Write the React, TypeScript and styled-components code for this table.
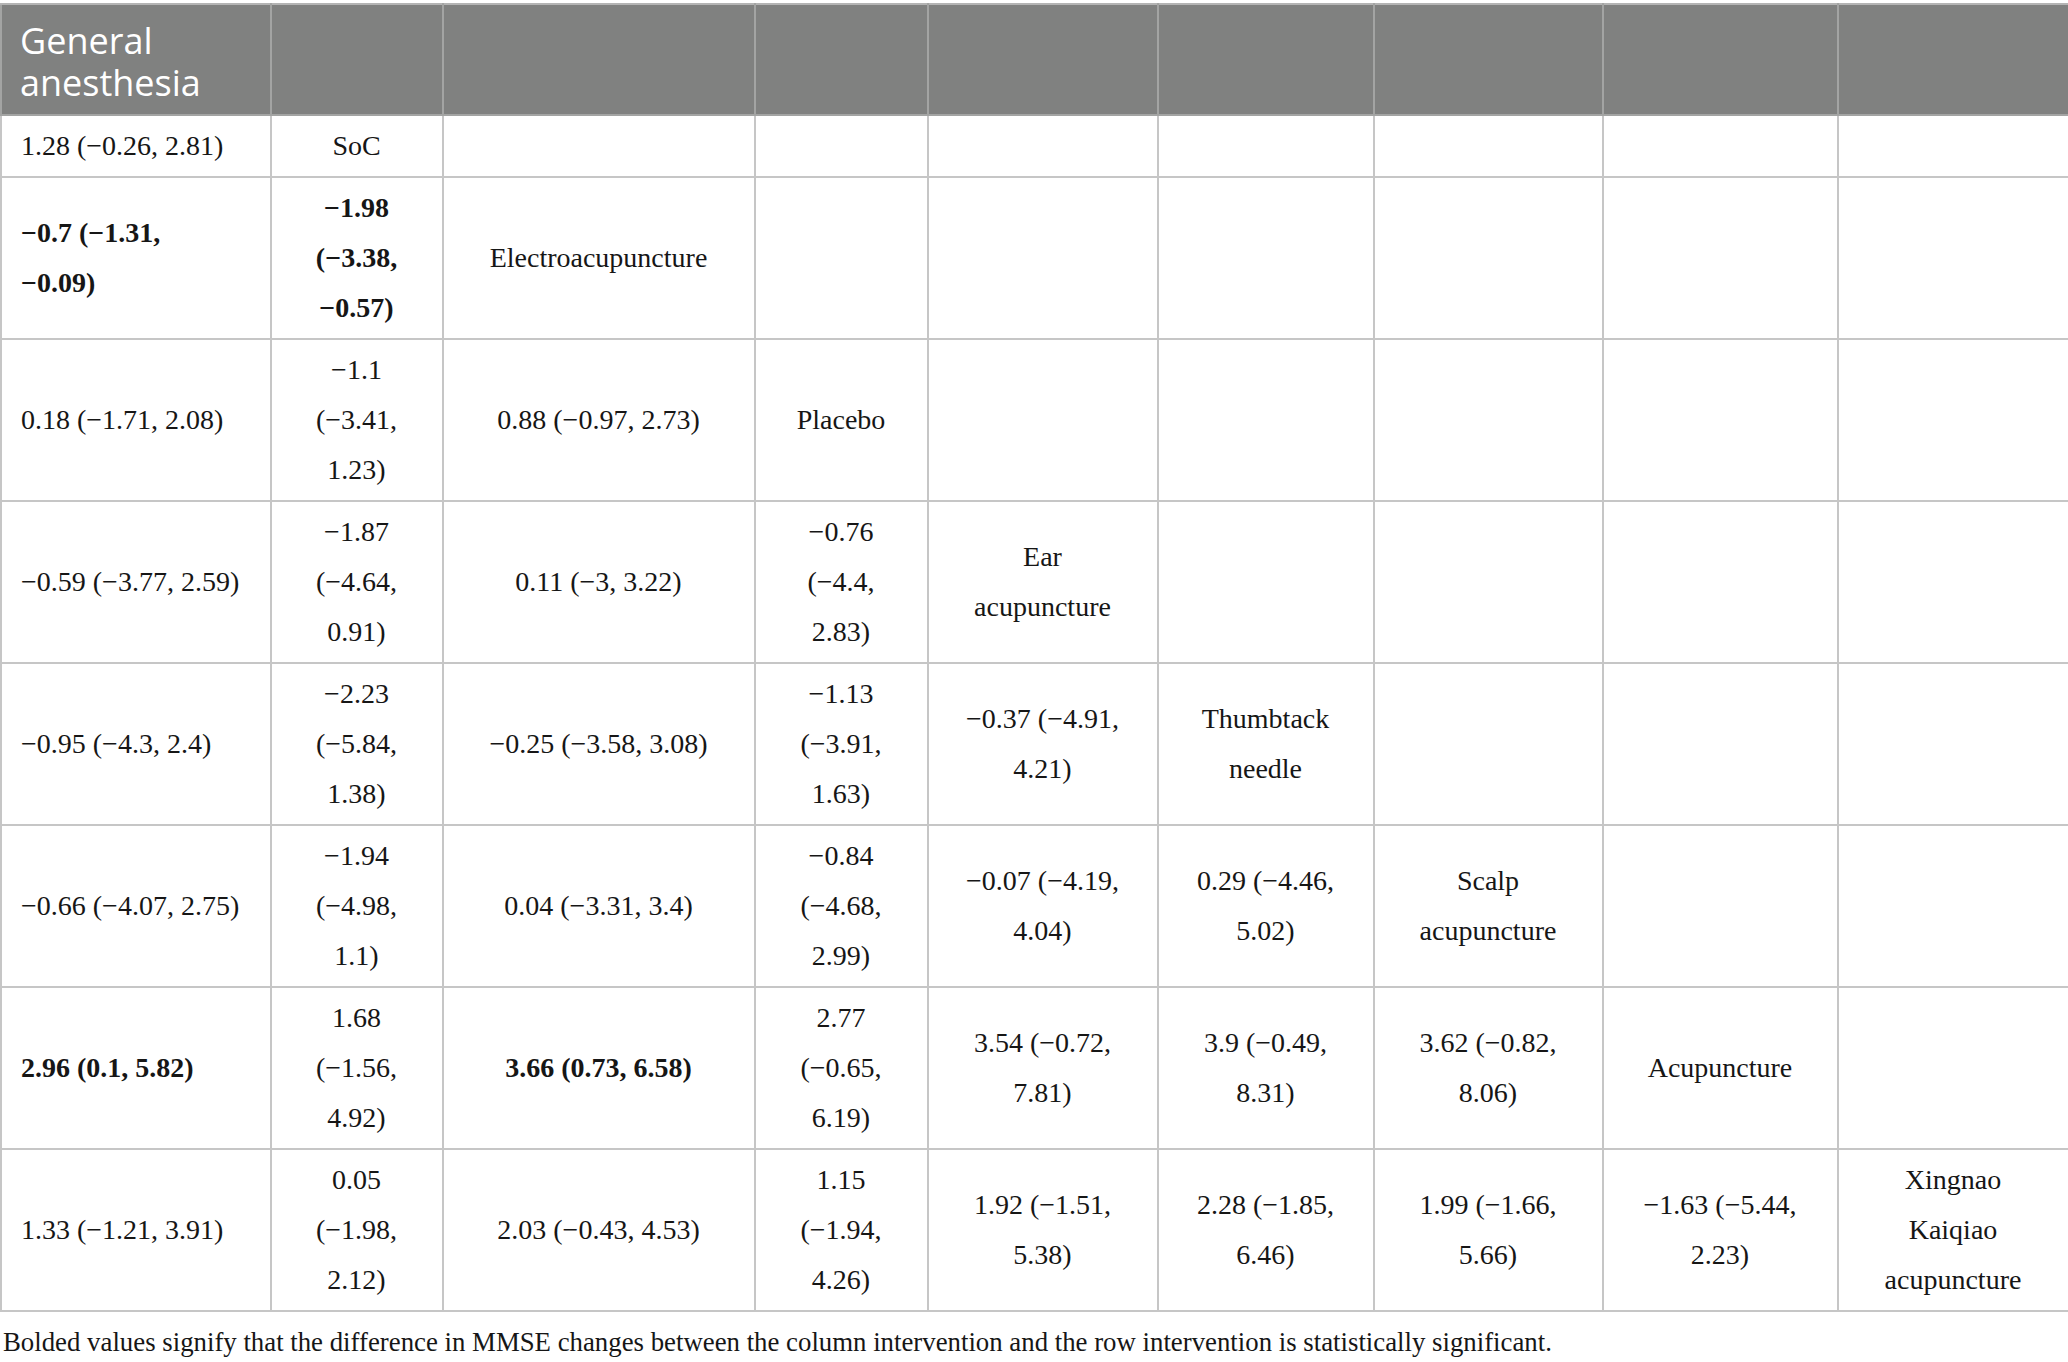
import styled, {createGlobalStyle} from 'styled-components'

const Global = createGlobalStyle`
    body {
        margin: 0;
        background: #ffffff;
    }
`

const Page = styled.div`
    width: 2068px;
    padding-top: 3px;
`

const Table = styled.table`
    width: 2068px;
    table-layout: fixed;
    border-collapse: collapse;
    font-family: 'Liberation Serif', 'Times New Roman', serif;
    font-size: 28px;
    color: #161616;
`

const HeadCell = styled.th`
    background: #808180;
    color: #ffffff;
    font-family: 'Open Sans', 'Noto Sans', sans-serif;
    font-weight: 400;
    font-size: 36px;
    line-height: 42px;
    text-align: left;
    vertical-align: top;
    padding: 15px 18px 10px;
    height: 84px;
    border: 2px solid #a3a4a3;
    border-top-color: #b4b4b4;
`

const Cell = styled.td<{$left?: boolean; $bold?: boolean}>`
    border: 2px solid #c6c6c6;
    padding: 5px 20px 5px 19px;
    line-height: 50px;
    text-align: ${(p) => (p.$left ? 'left' : 'center')};
    vertical-align: middle;
    font-weight: ${(p) => (p.$bold ? 700 : 400)};
`

const Line = styled.div`
    white-space: nowrap;
`

const Caption = styled.p`
    margin: 12px 0 0 3px;
    font-family: 'Liberation Serif', 'Times New Roman', serif;
    font-size: 26.8px;
    line-height: 36px;
    color: #161616;
`

const widths = [270, 172, 312, 173, 230, 216, 229, 235, 231]

type Entry = {lines: string[]; bold?: boolean}

const t = (...lines: string[]): Entry => ({lines})
const b = (...lines: string[]): Entry => ({lines, bold: true})

const rows: Entry[][] = [
    [t('1.28 (−0.26, 2.81)'), t('SoC')],
    [b('−0.7 (−1.31,', '−0.09)'), b('−1.98', '(−3.38,', '−0.57)'), t('Electroacupuncture')],
    [t('0.18 (−1.71, 2.08)'), t('−1.1', '(−3.41,', '1.23)'), t('0.88 (−0.97, 2.73)'), t('Placebo')],
    [
        t('−0.59 (−3.77, 2.59)'),
        t('−1.87', '(−4.64,', '0.91)'),
        t('0.11 (−3, 3.22)'),
        t('−0.76', '(−4.4,', '2.83)'),
        t('Ear', 'acupuncture'),
    ],
    [
        t('−0.95 (−4.3, 2.4)'),
        t('−2.23', '(−5.84,', '1.38)'),
        t('−0.25 (−3.58, 3.08)'),
        t('−1.13', '(−3.91,', '1.63)'),
        t('−0.37 (−4.91,', '4.21)'),
        t('Thumbtack', 'needle'),
    ],
    [
        t('−0.66 (−4.07, 2.75)'),
        t('−1.94', '(−4.98,', '1.1)'),
        t('0.04 (−3.31, 3.4)'),
        t('−0.84', '(−4.68,', '2.99)'),
        t('−0.07 (−4.19,', '4.04)'),
        t('0.29 (−4.46,', '5.02)'),
        t('Scalp', 'acupuncture'),
    ],
    [
        b('2.96 (0.1, 5.82)'),
        t('1.68', '(−1.56,', '4.92)'),
        b('3.66 (0.73, 6.58)'),
        t('2.77', '(−0.65,', '6.19)'),
        t('3.54 (−0.72,', '7.81)'),
        t('3.9 (−0.49,', '8.31)'),
        t('3.62 (−0.82,', '8.06)'),
        t('Acupuncture'),
    ],
    [
        t('1.33 (−1.21, 3.91)'),
        t('0.05', '(−1.98,', '2.12)'),
        t('2.03 (−0.43, 4.53)'),
        t('1.15', '(−1.94,', '4.26)'),
        t('1.92 (−1.51,', '5.38)'),
        t('2.28 (−1.85,', '6.46)'),
        t('1.99 (−1.66,', '5.66)'),
        t('−1.63 (−5.44,', '2.23)'),
        t('Xingnao', 'Kaiqiao', 'acupuncture'),
    ],
]

function App() {
    return (
        <Page>
            <Global />
            <Table>
                <colgroup>
                    {widths.map((w, i) => (
                        <col key={i} style={{width: w}} />
                    ))}
                </colgroup>
                <thead>
                    <tr>
                        <HeadCell>
                            General
                            <br />
                            anesthesia
                        </HeadCell>
                        {widths.slice(1).map((_, i) => (
                            <HeadCell key={i} />
                        ))}
                    </tr>
                </thead>
                <tbody>
                    {rows.map((row, r) => (
                        <tr key={r}>
                            {widths.map((_, c) => {
                                const e = row[c]
                                return (
                                    <Cell key={c} $left={c == 0} $bold={e?.bold}>
                                        {e ? e.lines.map((l, k) => <Line key={k}>{l}</Line>) : null}
                                    </Cell>
                                )
                            })}
                        </tr>
                    ))}
                </tbody>
            </Table>
            <Caption>
                Bolded values signify that the difference in MMSE changes between the column intervention and the row
                intervention is statistically significant.
            </Caption>
        </Page>
    )
}

export default App
